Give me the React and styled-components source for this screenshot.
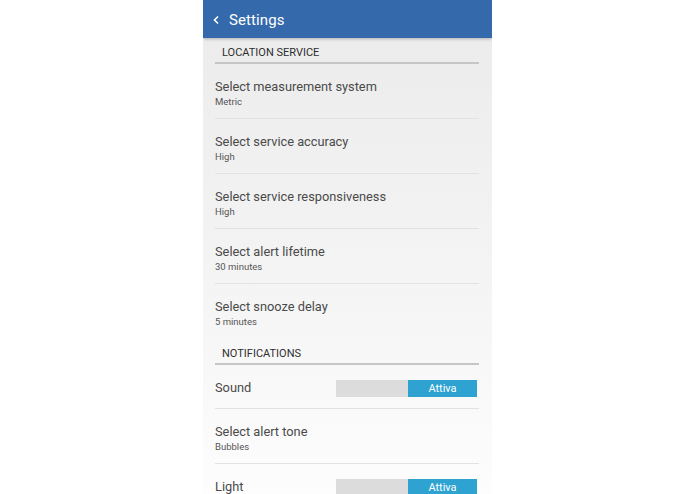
import React from "react";
import styled, { createGlobalStyle } from "styled-components";

const GlobalStyle = createGlobalStyle`
  html, body {
    margin: 0;
    padding: 0;
    background: #ffffff;
    font-family: Roboto, "Liberation Sans", Arial, sans-serif;
  }
`;

const Page = styled.div`
  display: flex;
  justify-content: flex-start;
  height: 494px;
  overflow: hidden;
`;

const Phone = styled.div`
  margin-left: 203px;
  width: 289px;
  height: 494px;
  display: flex;
  flex-direction: column;
  background: linear-gradient(180deg, #ebebeb 0%, #f3f3f3 50%, #fdfdfd 100%);
  overflow: hidden;
`;

const AppBar = styled.div`
  height: 38px;
  box-sizing: border-box;
  flex-shrink: 0;
  background: #346aab;
  display: flex;
  align-items: center;
  padding: 1px 0 0 9px;
  gap: 9px;
  box-shadow: 0 1px 3px rgba(0, 0, 0, 0.25);
  position: relative;
  z-index: 1;
`;

const Title = styled.div`
  color: #ffffff;
  font-size: 15px;
  letter-spacing: 0.1px;
`;

const Content = styled.div`
  padding: 0 13px 0 12px;
  display: flex;
  flex-direction: column;
`;

const SectionHeader = styled.div`
  padding: 8px 7px 2px;
  line-height: 14px;
  font-size: 11px;
  color: #2e2e2e;
  text-transform: uppercase;
  border-bottom: 2px solid #c6c6c6;
`;

const Item = styled.div`
  padding: 15px 0 10px;
  border-bottom: 1px solid ${(p) => (p.$last ? "transparent" : "#e2e2e2")};
`;

const ItemTitle = styled.div`
  font-size: 12.8px;
  line-height: 16px;
  color: #4a4a4a;
`;

const ItemValue = styled.div`
  font-size: 9.5px;
  line-height: 13px;
  color: #555555;
`;

const ToggleRow = styled.div`
  height: 40px;
  padding-top: 3px;
  display: flex;
  align-items: center;
  justify-content: space-between;
  border-bottom: 1px solid #e2e2e2;
`;

const Toggle = styled.div`
  display: flex;
  width: 141px;
  height: 17px;
  margin-right: 2px;
`;

const ToggleOff = styled.div`
  flex: 0 0 72px;
  background: #dcdcdc;
`;

const ToggleOn = styled.div`
  flex: 1;
  background: #2ea3d2;
  color: #ffffff;
  font-size: 11px;
  display: flex;
  align-items: center;
  justify-content: center;
`;

const Chevron = () => (
  <svg width="8" height="10" viewBox="0 0 8 10">
    <path d="M6 1.5 L2.5 5 L6 8.5" fill="none" stroke="#ffffff" strokeWidth="1.6" />
  </svg>
);

const settings = [
  ["Select measurement system", "Metric"],
  ["Select service accuracy", "High"],
  ["Select service responsiveness", "High"],
  ["Select alert lifetime", "30 minutes"],
  ["Select snooze delay", "5 minutes"],
];

const Switch = ({ label }) => (
  <ToggleRow>
    <ItemTitle>{label}</ItemTitle>
    <Toggle>
      <ToggleOff />
      <ToggleOn>Attiva</ToggleOn>
    </Toggle>
  </ToggleRow>
);

export default function App() {
  return (
    <Page>
      <GlobalStyle />
      <Phone>
        <AppBar>
          <Chevron />
          <Title>Settings</Title>
        </AppBar>
        <Content>
          <SectionHeader>Location service</SectionHeader>
          {settings.map(([title, value], i) => (
            <Item key={title} $last={i === settings.length - 1}>
              <ItemTitle>{title}</ItemTitle>
              <ItemValue>{value}</ItemValue>
            </Item>
          ))}
          <SectionHeader>Notifications</SectionHeader>
          <Switch label="Sound" />
          <Item>
            <ItemTitle>Select alert tone</ItemTitle>
            <ItemValue>Bubbles</ItemValue>
          </Item>
          <Switch label="Light" />
        </Content>
      </Phone>
    </Page>
  );
}
